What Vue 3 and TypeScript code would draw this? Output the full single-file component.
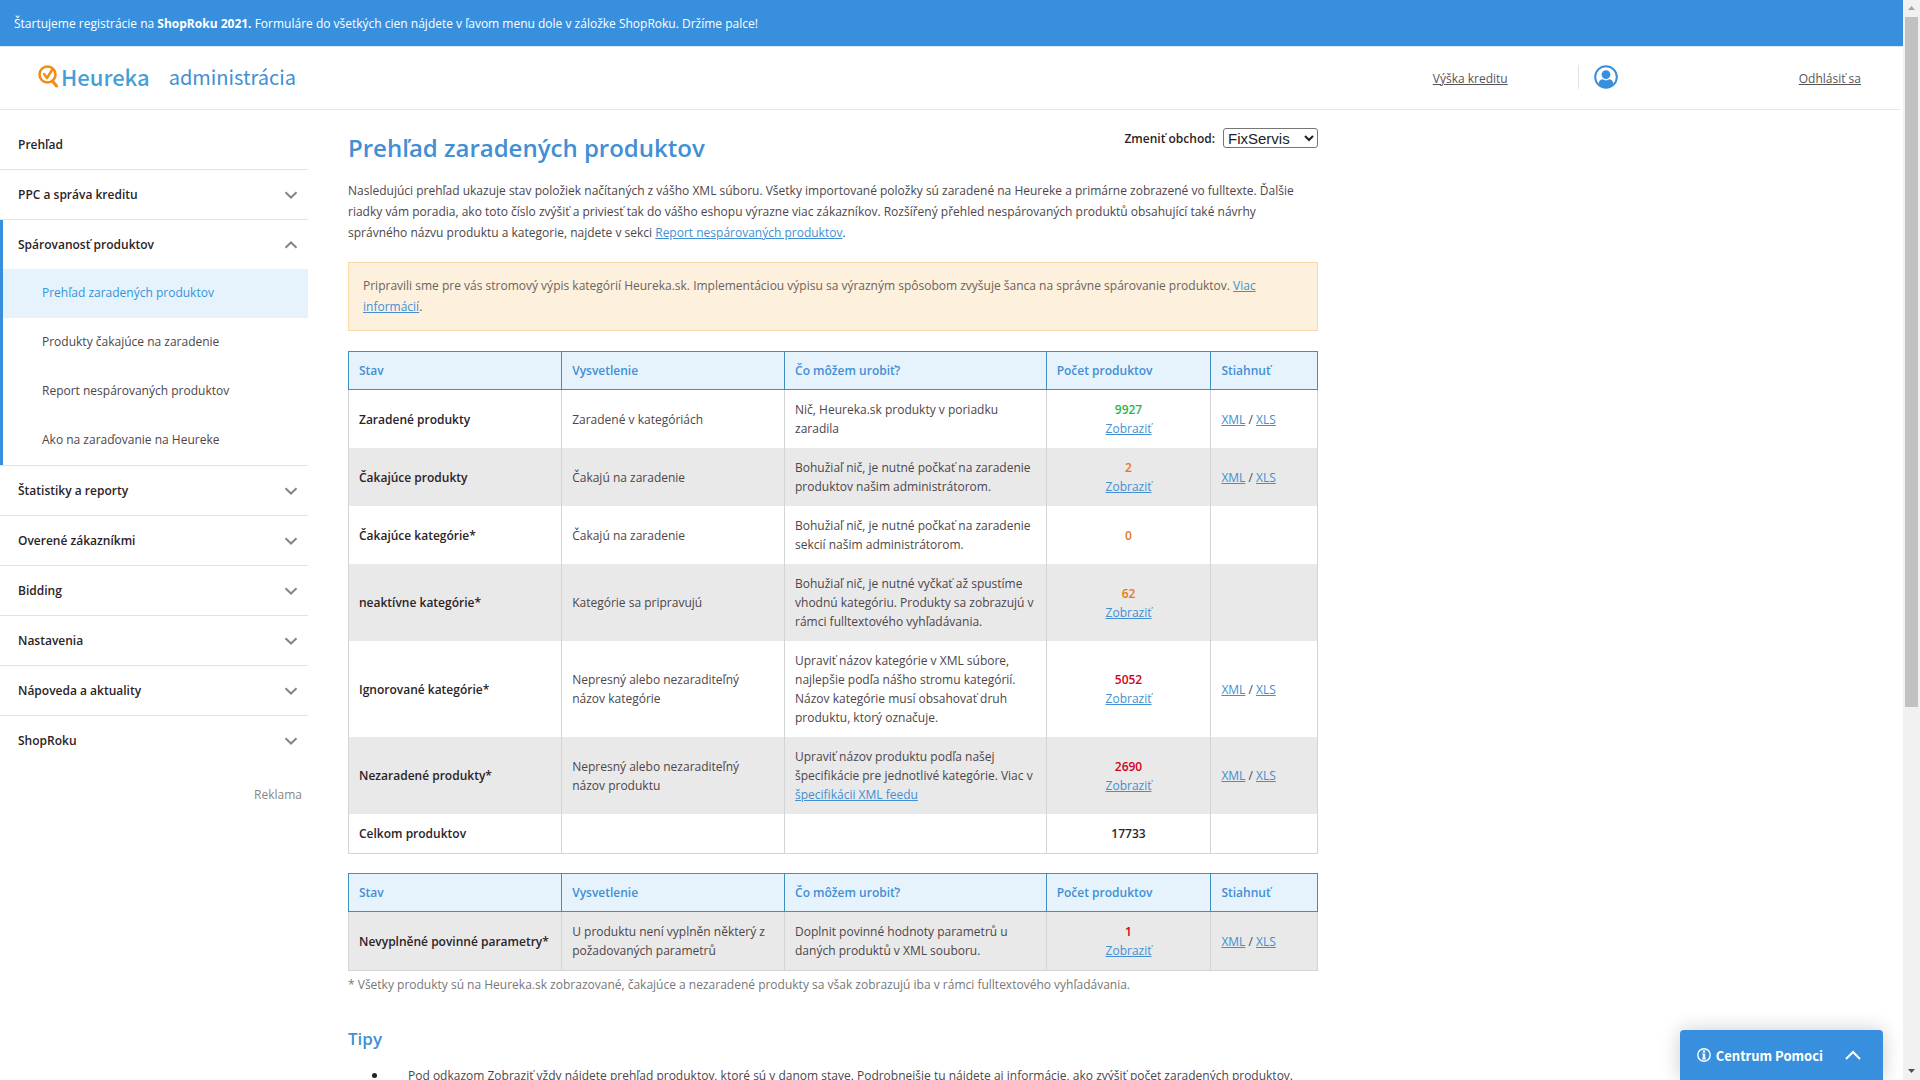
<script setup lang="ts">
import { ref } from 'vue'

interface MenuItem {
  label: string
  children?: string[]
  expandable: boolean
}

interface StatusRow {
  state: string
  meaning: string
  advice: string
  adviceLink?: string
  count: number
  tone: 'good' | 'waiting' | 'bad' | 'total'
  show: boolean
  download: boolean
}

interface StatusTable {
  id: string
  firstShaded: boolean
  rows: StatusRow[]
}

const menu: MenuItem[] = [
  { label: 'Prehľad', expandable: false },
  { label: 'PPC a správa kreditu', expandable: true },
  {
    label: 'Spárovanosť produktov',
    expandable: true,
    children: [
      'Prehľad zaradených produktov',
      'Produkty čakajúce na zaradenie',
      'Report nespárovaných produktov',
      'Ako na zaraďovanie na Heureke',
    ],
  },
  { label: 'Štatistiky a reporty', expandable: true },
  { label: 'Overené zákazníkmi', expandable: true },
  { label: 'Bidding', expandable: true },
  { label: 'Nastavenia', expandable: true },
  { label: 'Nápoveda a aktuality', expandable: true },
  { label: 'ShopRoku', expandable: true },
]

const currentPage = 'Prehľad zaradených produktov'
const shop = ref('FixServis')

const columns = ['Stav', 'Vysvetlenie', 'Čo môžem urobiť?', 'Počet produktov', 'Stiahnuť']

const tables: StatusTable[] = [
  {
    id: 'products',
    firstShaded: false,
    rows: [
      { state: 'Zaradené produkty', meaning: 'Zaradené v kategóriách', advice: 'Nič, Heureka.sk produkty v poriadku zaradila', count: 9927, tone: 'good', show: true, download: true },
      { state: 'Čakajúce produkty', meaning: 'Čakajú na zaradenie', advice: 'Bohužiaľ nič, je nutné počkať na zaradenie produktov našim administrátorom.', count: 2, tone: 'waiting', show: true, download: true },
      { state: 'Čakajúce kategórie*', meaning: 'Čakajú na zaradenie', advice: 'Bohužiaľ nič, je nutné počkať na zaradenie sekcií našim administrátorom.', count: 0, tone: 'waiting', show: false, download: false },
      { state: 'neaktívne kategórie*', meaning: 'Kategórie sa pripravujú', advice: 'Bohužiaľ nič, je nutné vyčkať až spustíme vhodnú kategóriu. Produkty sa zobrazujú v rámci fulltextového vyhľadávania.', count: 62, tone: 'waiting', show: true, download: false },
      { state: 'Ignorované kategórie*', meaning: 'Nepresný alebo nezaraditeľný názov kategórie', advice: 'Upraviť názov kategórie v XML súbore, najlepšie podľa nášho stromu kategórií. Názov kategórie musí obsahovať druh produktu, ktorý označuje.', count: 5052, tone: 'bad', show: true, download: true },
      { state: 'Nezaradené produkty*', meaning: 'Nepresný alebo nezaraditeľný názov produktu', advice: 'Upraviť názov produktu podľa našej špecifikácie pre jednotlivé kategórie. Viac v', adviceLink: 'špecifikácii XML feedu', count: 2690, tone: 'bad', show: true, download: true },
      { state: 'Celkom produktov', meaning: '', advice: '', count: 17733, tone: 'total', show: false, download: false },
    ],
  },
  {
    id: 'parameters',
    firstShaded: true,
    rows: [
      { state: 'Nevyplněné povinné parametry*', meaning: 'U produktu není vyplněn některý z požadovaných parametrů', advice: 'Doplnit povinné hodnoty parametrů u daných produktů v XML souboru.', count: 1, tone: 'bad', show: true, download: true },
    ],
  },
]
</script>

<template>
  <div class="shell">
    <div class="page">
      <div class="banner">
        Štartujeme registrácie na <strong>ShopRoku 2021.</strong> Formuláre do všetkých cien nájdete v ľavom menu dole v záložke ShopRoku. Držíme palce!
      </div>

      <header class="header">
        <a class="brand" href="#">
          <svg class="brand-mark" viewBox="0 0 20 23" aria-hidden="true">
            <circle cx="9.500" cy="9.500" r="8" fill="none" stroke="#f28c13" stroke-width="2.600" />
            <path d="M14.500 16l4 5" fill="none" stroke="#f28c13" stroke-width="3" stroke-linecap="round" />
            <path d="M6 9l3 4 5-8" fill="none" stroke="#f28c13" stroke-width="2.400" stroke-linecap="round" stroke-linejoin="round" />
          </svg>
          <span class="brand-name">Heureka</span>
          <span class="brand-section">administrácia</span>
        </a>
        <nav class="account">
          <a class="credit" href="#">Výška kreditu</a>
          <a class="profile" href="#" aria-label="Profil">
            <svg viewBox="0 0 24 24" aria-hidden="true">
              <circle cx="12" cy="12" r="10.800" fill="#fff" stroke="#378fdd" stroke-width="2" />
              <circle cx="12" cy="9.600" r="4.400" fill="#378fdd" />
              <path d="M4.500 18.500C5.200 15.500 7 14.300 8.600 14.300c2 1.500 4.800 1.500 6.800 0 1.600 0 3.400 1.200 4.100 4.200C17.500 21.500 15 23 12 23s-5.500-1.500-7.500-4.500z" fill="#378fdd" />
            </svg>
          </a>
          <a class="logout" href="#">Odhlásiť sa</a>
        </nav>
      </header>

      <div class="columns">
        <aside class="sidebar">
          <ul class="menu">
            <li v-for="item in menu" :key="item.label" class="menu-item" :class="{ open: item.children }">
              <a v-if="!item.expandable" class="menu-head" href="#">{{ item.label }}</a>
              <button v-else type="button" class="menu-head" :aria-expanded="!!item.children">
                {{ item.label }}
                <svg class="chevron" :class="{ up: item.children }" viewBox="0 0 14 8" aria-hidden="true">
                  <path d="M1.500 1.200L7 6.500l5.500-5.300" />
                </svg>
              </button>
              <ul v-if="item.children" class="submenu">
                <li v-for="child in item.children" :key="child">
                  <a href="#" :class="{ current: child === currentPage }">{{ child }}</a>
                </li>
              </ul>
            </li>
          </ul>
          <p class="ad-label">Reklama</p>
        </aside>

        <main class="content">
          <div class="title-row">
            <h1>Prehľad zaradených produktov</h1>
            <div class="shop-switch">
              <label for="shop">Zmeniť obchod:</label>
              <select id="shop" v-model="shop">
                <option>FixServis</option>
              </select>
            </div>
          </div>

          <p class="intro">
            Nasledujúci prehľad ukazuje stav položiek načítaných z vášho XML súboru. Všetky importované položky sú zaradené na Heureke a primárne zobrazené vo fulltexte. Ďalšie riadky vám poradia, ako toto číslo zvýšiť a priviesť tak do vášho eshopu výrazne viac zákazníkov. Rozšířený přehled nespárovaných produktů obsahující také návrhy správného názvu produktu a kategorie, najdete v sekci <a href="#">Report nespárovaných produktov</a>.
          </p>

          <p class="notice">
            Pripravili sme pre vás stromový výpis kategórií Heureka.sk. Implementáciou výpisu sa výrazným spôsobom zvyšuje šanca na správne spárovanie produktov. <a href="#">Viac informácií</a>.
          </p>

          <table v-for="table in tables" :key="table.id" :class="{ shaded: table.firstShaded }">
            <colgroup>
              <col class="c-state" /><col class="c-meaning" /><col class="c-advice" /><col class="c-count" /><col class="c-files" />
            </colgroup>
            <thead>
              <tr>
                <th v-for="column in columns" :key="column" scope="col">{{ column }}</th>
              </tr>
            </thead>
            <tbody>
              <tr v-for="row in table.rows" :key="row.state">
                <td class="state">{{ row.state }}</td>
                <td>{{ row.meaning }}</td>
                <td>{{ row.advice }} <a v-if="row.adviceLink" href="#">{{ row.adviceLink }}</a></td>
                <td class="count">
                  <strong :class="row.tone">{{ row.count }}</strong>
                  <a v-if="row.show" href="#">Zobraziť</a>
                </td>
                <td><template v-if="row.download"><a href="#">XML</a> / <a href="#">XLS</a></template></td>
              </tr>
            </tbody>
          </table>

          <p class="footnote">* Všetky produkty sú na Heureka.sk zobrazované, čakajúce a nezaradené produkty sa však zobrazujú iba v rámci fulltextového vyhľadávania.</p>

          <h2>Tipy</h2>
          <ul class="tips">
            <li>Pod odkazom Zobraziť vždy nájdete prehľad produktov, ktoré sú v danom stave. Podrobnejšie tu nájdete aj informácie, ako zvýšiť počet zaradených produktov.</li>
          </ul>
        </main>
      </div>
    </div>

    <div class="scrollbar" aria-hidden="true">
      <svg viewBox="0 0 17 17"><path d="M5 10h7L8.500 6z" fill="#a3a3a3" /></svg>
      <div class="track"><div class="thumb"></div></div>
      <svg viewBox="0 0 17 17"><path d="M5 6h7L8.500 10z" fill="#505050" /></svg>
    </div>

    <button type="button" class="help">
      <svg class="help-info" viewBox="0 0 14 14" aria-hidden="true">
        <circle cx="7" cy="7" r="6.200" fill="none" stroke="#fff" stroke-width="1.400" />
        <path d="M5.800 2.600h2.400v2H5.800zM5 5.400h3.200v4.800H9v1.200H5v-1.200h.8V6.600H5z" fill="#fff" />
      </svg>
      Centrum Pomoci
      <svg class="help-arrow" viewBox="0 0 16 10" aria-hidden="true">
        <path d="M1 9l7-7 7 7" fill="none" stroke="#fff" stroke-width="2" />
      </svg>
    </button>
  </div>
</template>

<style>
body {
  overflow: hidden;
}
</style>

<style scoped>
.shell {
  --blue: #378fdd;
  --link: #428fd3;
  --text: #4c464a;
  --dark: #2b2328;
  --display: "Noto Sans CJK SC", "Noto Sans", sans-serif;
  display: flex;
  height: 100vh;
  background: #fff;
  color: var(--text);
  font-family: "Open Sans", "Noto Sans", sans-serif;
  font-size: 12px;
  line-height: 19px;
}

ul,
p,
h1,
h2 {
  margin: 0;
  padding: 0;
}

ul {
  list-style: none;
}

a {
  color: var(--link);
}

button {
  border: 0;
  background: none;
  font: inherit;
  cursor: pointer;
}

.page {
  flex: 1;
  min-width: 0;
  overflow: hidden;
}

.banner {
  padding: 15px 14px 13px;
  border-bottom: 1px solid #d5e9f9;
  background: var(--blue);
  background-clip: padding-box;
  color: #fff;
  line-height: 18px;
}

.header {
  display: flex;
  box-sizing: border-box;
  align-items: center;
  justify-content: space-between;
  height: 63px;
  margin-right: 3px;
  padding: 0 39px 3px 38px;
  border-bottom: 1px solid #e6e6e6;
}

.brand {
  display: flex;
  align-items: center;
  color: var(--link);
  font-family: var(--display);
  line-height: 24px;
  text-decoration: none;
}

.brand-mark {
  width: 20px;
  height: 23px;
  margin-right: 3px;
}

.brand-name {
  margin-right: 19px;
  padding-bottom: 2px;
  color: #459fd6;
  font-size: 22px;
  font-weight: 500;
}

.brand-section {
  font-size: 20px;
}

.account {
  display: flex;
  align-items: center;
}

.account a {
  color: #595357;
}

.credit,
.logout {
  padding-top: 3px;
}

.profile {
  margin: 0 181px 0 70px;
  padding-left: 15px;
  border-left: 1px solid #e3e3e3;
}

.profile svg {
  display: block;
  width: 24px;
  height: 24px;
}

.columns {
  display: flex;
  gap: 40px;
}

.sidebar {
  flex: none;
  width: 308px;
  padding-top: 10px;
}

.menu-item {
  border-bottom: 1px solid #e3e3e3;
}

.menu-item:last-child {
  border-bottom: 0;
}

.menu-head {
  display: flex;
  box-sizing: border-box;
  align-items: center;
  justify-content: space-between;
  width: 100%;
  height: 49px;
  padding: 0 10px 0 18px;
  color: var(--dark);
  font-weight: 600;
  text-align: left;
  text-decoration: none;
}

.open {
  position: relative;
}

.open::before {
  position: absolute;
  inset: 0 auto 0 0;
  width: 3px;
  background: var(--blue);
  content: "";
}

.chevron {
  width: 14px;
  height: 8px;
  fill: none;
  stroke: #858585;
  stroke-width: 2;
}

.chevron.up {
  transform: rotate(180deg);
}

.submenu a {
  display: block;
  padding: 14px 0 16px 42px;
  color: var(--text);
  text-decoration: none;
}

.submenu .current {
  background: #e6f3fd;
  color: #2f96d9;
}

.ad-label {
  padding: 20px 6px 0 0;
  color: #888;
  text-align: right;
}

.content {
  flex: 0 1 970px;
}

.title-row {
  display: flex;
  align-items: flex-start;
  justify-content: space-between;
  padding-top: 18px;
}

h1 {
  color: var(--link);
  font-size: 24px;
  font-weight: 600;
  line-height: 40px;
}

.shop-switch {
  display: flex;
  align-items: center;
  gap: 8px;
  color: var(--dark);
  font-weight: 600;
}

select {
  width: 95px;
  height: 20px;
  padding: 0;
  border: 1px solid #767676;
  border-radius: 3px;
  background: #fff;
  color: #222;
  font-family: "Liberation Sans", sans-serif;
  font-size: 15px;
}

.intro {
  margin-top: 12px;
  line-height: 21px;
}

.notice {
  margin: 19px 0 20px;
  padding: 12px 14px 13px;
  border: 1px solid #f6d9a9;
  background: #fdf0dc;
  color: #6b6360;
  line-height: 21px;
}

table {
  width: 100%;
  margin-top: 19px;
  border-collapse: collapse;
  table-layout: fixed;
}

.c-state {
  width: 22%;
}

.c-meaning {
  width: 23%;
}

.c-advice {
  width: 27%;
}

.c-count {
  width: 17%;
}

.c-files {
  width: 11%;
}

th,
td {
  padding: 10px;
  text-align: left;
}

th {
  padding: 9px 10px;
  border: 1px solid #3f8fc0;
  background: #e6f3fd;
  color: var(--link);
  font-weight: 600;
}

td {
  border: solid #d4d4d4;
  border-width: 0 1px;
}

tbody {
  border-bottom: 1px solid #d4d4d4;
}

tbody tr:nth-child(even),
.shaded tbody tr {
  background: #e9e9e9;
}

.state {
  color: var(--dark);
  font-weight: 600;
}

.count {
  text-align: center;
}

.count strong {
  display: block;
  font-weight: 600;
}

.good {
  color: #2cb34a;
}

.waiting {
  color: #e67817;
}

.bad {
  color: #d0021b;
}

.total {
  color: var(--dark);
}

.footnote {
  margin-top: 4px;
  color: #777;
}

h2 {
  margin-top: 32px;
  color: var(--link);
  font-size: 17px;
  font-weight: 600;
  line-height: 26px;
}

.tips {
  margin: 13px 0 0 24px;
  line-height: 21px;
}

.tips li {
  display: flex;
  gap: 31px;
}

.tips li::before {
  flex: none;
  width: 5px;
  height: 5px;
  margin-top: 8px;
  border-radius: 50%;
  background: #222;
  content: "";
}

.scrollbar {
  display: flex;
  flex: none;
  flex-direction: column;
  width: 17px;
  background: #f1f1f1;
}

.scrollbar svg {
  display: block;
  height: 17px;
}

.track {
  flex: 1;
  padding: 0 2px;
}

.thumb {
  height: 66%;
  background: #c1c1c1;
}

.help {
  position: absolute;
  right: 37px;
  bottom: 0;
  display: flex;
  align-items: center;
  height: 50px;
  padding: 0 22px 0 17px;
  border-radius: 4px 4px 0 0;
  background: var(--blue);
  box-shadow: 0 0 20px rgba(0, 0, 0, 0.2);
  color: #fff;
  font-family: var(--display);
  font-size: 13px;
  font-weight: 700;
}

.help-info {
  width: 14px;
  height: 14px;
  margin-right: 5px;
}

.help-arrow {
  width: 16px;
  height: 10px;
  margin-left: 22px;
}
</style>
